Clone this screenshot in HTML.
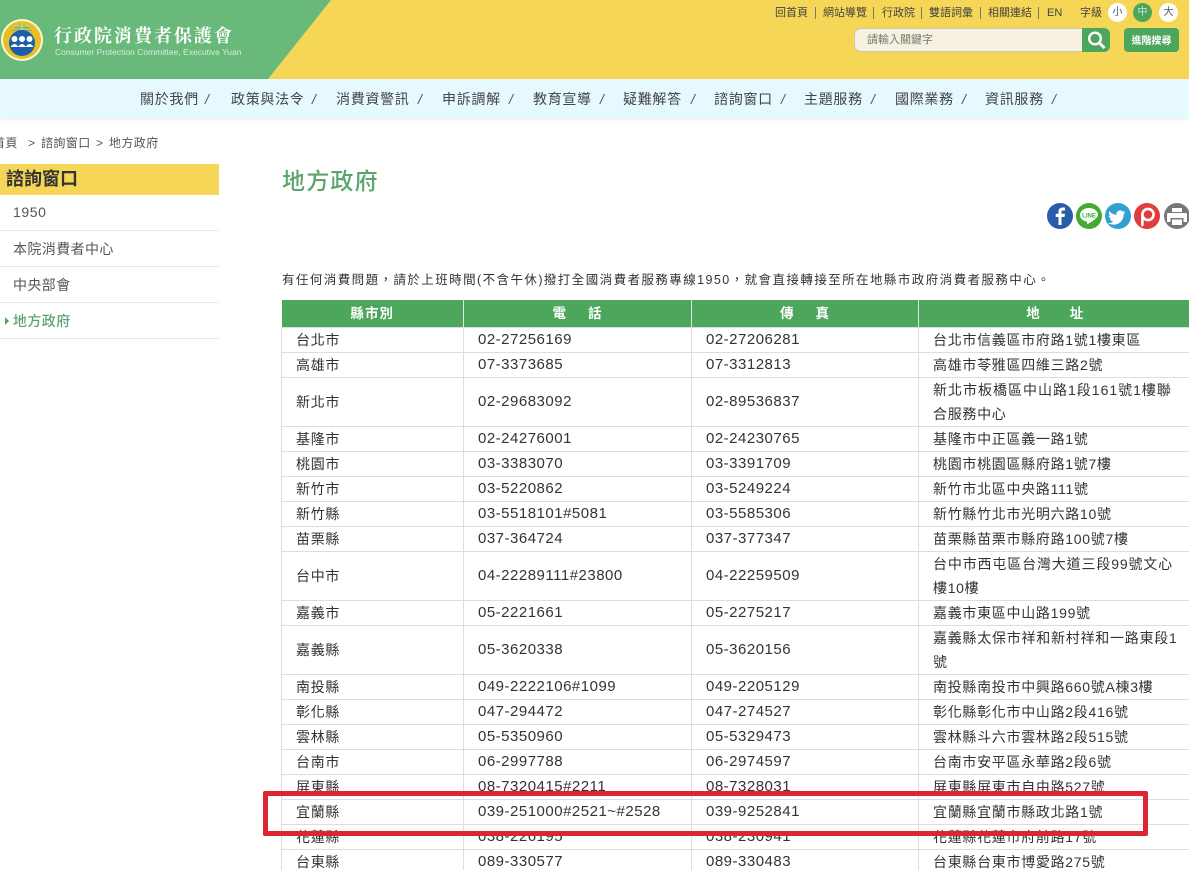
<!DOCTYPE html>
<html lang="zh-Hant"><head><meta charset="utf-8"><title>地方政府</title>
<style>
html,body{margin:0;padding:0;width:1189px;height:870px;overflow:hidden;background:#fff}
body{position:relative;font-family:"Liberation Sans","Noto Sans CJK TC",sans-serif;color:#333}
.a{position:absolute;white-space:nowrap}
.top{top:6px;font-size:11px;line-height:14px;color:#444}
.sep{top:7px;width:1px;height:12px;background:#777}
.dot{top:3px;width:19px;height:19px;border-radius:50%;background:#fff;font-size:10px;line-height:19px;text-align:center;color:#555}
.nav{top:90px;font-size:14px;line-height:18px;letter-spacing:.7px;color:#444}
.sl{top:90px;font-size:14px;line-height:18px;color:#555;font-style:italic}
.side{left:13px;font-size:14px;line-height:20px;letter-spacing:.4px;color:#555}
.ln{left:0;width:219px;height:1px;background:#e8e8e8}
table{position:absolute;left:281px;top:300px;width:910px;table-layout:fixed;border-collapse:collapse;font-size:14px;letter-spacing:.7px;color:#333}
th{background:#4ca65c;color:#fff;height:27px;padding:0;font-size:13.5px;font-weight:700;border-left:1px solid #e4e4e4;line-height:20px;letter-spacing:1px}
th i{display:inline-block;width:21px}
td{border:1px solid #ddd;padding:0 0 0 14px;line-height:24px;white-space:nowrap;vertical-align:middle}
td:nth-child(2),td:nth-child(3){font-size:15px;letter-spacing:.5px}
tr{height:25px}
tr.d{height:49px}
</style></head><body>
<div class="a" style="left:0;top:0;width:1189px;height:79px;background:#f5d657"></div>
<svg class="a" style="left:0;top:0" width="340" height="79"><polygon points="0,0 331,0 268,79 0,79" fill="#68b97a"/>
<circle cx="22" cy="40" r="21" fill="#fdf6d0"/><circle cx="22" cy="40" r="19" fill="#e9bd25"/>
<path d="M12 31a11 11 0 0 1 20 0z" fill="#7fb06a"/><path d="M22 22v10M15 26h14M13 29h18" stroke="#f3e59a" stroke-width=".8"/>
<circle cx="22" cy="43" r="13" fill="#1c5fa8"/>
<circle cx="14.500" cy="39" r="3" fill="#fff"/><circle cx="22" cy="39" r="3" fill="#fff"/><circle cx="29.500" cy="39" r="3" fill="#fff"/>
<path d="M10.500 47q4-6 8 0zM18 47q4-6 8 0zM25.500 47q4-6 8 0z" fill="#fff"/></svg>
<div class="a" style="left:54px;top:25px;font-family:'Liberation Serif','Noto Serif CJK TC','Noto Serif CJK SC',serif;font-weight:700;font-size:18px;line-height:22px;letter-spacing:2px;color:#fff">行政院消費者保護會</div>
<div class="a" style="left:55px;top:46px;font-size:8.500px;line-height:12px;color:#d6eeda">Consumer Protection Committee, Executive Yuan</div>

<span class="a top" style="left:775px">回首頁</span><i class="a sep" style="left:815px"></i>
<span class="a top" style="left:823px">網站導覽</span><i class="a sep" style="left:873px"></i>
<span class="a top" style="left:882px">行政院</span><i class="a sep" style="left:921px"></i>
<span class="a top" style="left:929px">雙語詞彙</span><i class="a sep" style="left:980px"></i>
<span class="a top" style="left:988px">相關連結</span><i class="a sep" style="left:1038px"></i>
<span class="a top" style="left:1047px">EN</span>
<span class="a top" style="left:1080px">字級</span>
<span class="a dot" style="left:1108px">小</span>
<span class="a dot" style="left:1133px;background:#4ca65c;color:#cfe8d3">中</span>
<span class="a dot" style="left:1159px">大</span>

<div class="a" style="left:854px;top:28px;width:236px;height:22px;background:#f7f2e0;border:1px solid #ccc8b4;border-radius:7px"></div>
<span class="a" style="left:867px;top:33px;font-size:11px;line-height:14px;color:#777">請輸入關鍵字</span>
<svg class="a" style="left:1082px;top:28px" width="28" height="24"><path d="M0 0h22a6 6 0 0 1 6 6v12a6 6 0 0 1-6 6H0z" fill="#4ca65c"/><circle cx="13" cy="10.500" r="5.800" fill="none" stroke="#fff" stroke-width="2.400"/><path d="M17.500 15l5 5" stroke="#fff" stroke-width="3"/></svg>
<div class="a" style="left:1124px;top:28px;width:55px;height:24px;border-radius:4px;background:#4ca65c;color:#fff;font-size:10px;font-weight:700;line-height:28px;text-align:center">進階搜尋</div>

<div class="a" style="left:0;top:79px;width:1189px;height:39px;background:#e5f9ff;box-shadow:0 1px 3px rgba(0,0,0,.1)"></div>
<span class="a nav" style="left:140px">關於我們</span><span class="a sl" style="left:205px">/</span>
<span class="a nav" style="left:231px">政策與法令</span><span class="a sl" style="left:312px">/</span>
<span class="a nav" style="left:336px">消費資警訊</span><span class="a sl" style="left:418px">/</span>
<span class="a nav" style="left:442px">申訴調解</span><span class="a sl" style="left:509px">/</span>
<span class="a nav" style="left:533px">教育宣導</span><span class="a sl" style="left:600px">/</span>
<span class="a nav" style="left:623px">疑難解答</span><span class="a sl" style="left:691px">/</span>
<span class="a nav" style="left:714px">諮詢窗口</span><span class="a sl" style="left:781px">/</span>
<span class="a nav" style="left:804px">主題服務</span><span class="a sl" style="left:871px">/</span>
<span class="a nav" style="left:895px">國際業務</span><span class="a sl" style="left:962px">/</span>
<span class="a nav" style="left:985px">資訊服務</span><span class="a sl" style="left:1052px">/</span>

<span class="a" style="left:-7px;top:136px;font-size:12px;line-height:15px;letter-spacing:.4px;color:#555">首頁</span>
<span class="a" style="left:28px;top:136px;font-size:12px;line-height:15px;color:#555">&gt;</span>
<span class="a" style="left:41px;top:136px;font-size:12px;line-height:15px;letter-spacing:.4px;color:#555">諮詢窗口</span>
<span class="a" style="left:96px;top:136px;font-size:12px;line-height:15px;color:#555">&gt;</span>
<span class="a" style="left:109px;top:136px;font-size:12px;line-height:15px;letter-spacing:.4px;color:#555">地方政府</span>

<div class="a" style="left:0;top:164px;width:219px;height:31px;background:#f5d657"></div>
<span class="a" style="left:6px;top:169px;font-size:18px;line-height:21px;font-weight:700;color:#333">諮詢窗口</span>
<span class="a side" style="top:202px;letter-spacing:.6px">1950</span><i class="a ln" style="top:230px"></i>
<span class="a side" style="top:239px">本院消費者中心</span><i class="a ln" style="top:266px"></i>
<span class="a side" style="top:275px">中央部會</span><i class="a ln" style="top:302px"></i>
<span class="a side" style="top:311px;color:#5ba56c;font-weight:500">地方政府</span><i class="a ln" style="top:338px"></i>
<svg class="a" style="left:5px;top:317px" width="4" height="8"><path d="M0 0l4 4-4 4z" fill="#4ca65c"/></svg>

<span class="a" style="left:282px;top:166px;font-size:23px;line-height:30px;font-weight:500;letter-spacing:1.200px;color:#5ba56c">地方政府</span>

<svg class="a" style="left:1047px;top:203px" width="142" height="27">
<circle cx="13" cy="13" r="13" fill="#2a5caa"/><path d="M14.500 22v-8h3l.5-3.200h-3.500V9c0-1 .4-1.500 1.600-1.500H18V4.700c-.6-.1-1.500-.2-2.400-.2-2.500 0-4.100 1.500-4.100 4.200v2.100H8.700V14h2.800v8z" fill="#fff"/>
<circle cx="42" cy="13" r="13" fill="#43ab2f"/><path d="M42 5c-5 0-9 3-9 7 0 3.400 2.900 6 6.800 6.500.5.100.4 2 .2 2.700 2-.8 6.500-3.500 9-6 1.200-1.200 2-2.100 2-3.200 0-4-4-7-9-7z" fill="#fff"/><text x="42" y="14.300" text-anchor="middle" font-family="Liberation Sans,sans-serif" font-size="6" font-weight="700" fill="#43ab2f">LINE</text>
<circle cx="71" cy="13" r="13" fill="#33a0d4"/><path d="M80 8.200c-.7.300-1.400.5-2.100.6.800-.5 1.300-1.200 1.600-2-.7.400-1.500.7-2.300.9a3.700 3.700 0 0 0-6.300 3.400c-3-.2-5.700-1.600-7.500-3.900-1 1.700-.5 3.800 1.100 4.900-.6 0-1.200-.2-1.700-.5 0 1.800 1.300 3.300 3 3.700-.5.100-1.100.2-1.700.1.500 1.500 1.900 2.500 3.500 2.600-1.600 1.200-3.500 1.800-5.500 1.600 1.700 1.100 3.700 1.700 5.700 1.700 6.900 0 10.700-5.800 10.500-11 .7-.6 1.300-1.200 1.800-2z" fill="#fff" transform="translate(1.500 1.200) scale(.96)"/>
<circle cx="100" cy="13" r="13" fill="#e23d3d"/><circle cx="101" cy="11.500" r="5.600" fill="none" stroke="#fff" stroke-width="2.600"/><path d="M95.400 11.500V22" stroke="#fff" stroke-width="2.600" stroke-linecap="round"/>
<circle cx="130" cy="13" r="13" fill="#777"/><path d="M125 5h10v4h-10zM121 10h18a1 1 0 0 1 1 1v8h-3.500v-4h-13v4H120v-8a1 1 0 0 1 1-1z" fill="#fff"/><path d="M125 16.500h10V22h-10z" fill="#fff"/>
</svg>

<div class="a" style="left:282px;top:271px;font-size:12.500px;line-height:18px;letter-spacing:1.430px;color:#333">有任何消費問題，請於上班時間(不含午休)撥打全國消費者服務專線1950，就會直接轉接至所在地縣市政府消費者服務中心。</div>

<table><colgroup><col style="width:182px"><col style="width:228px"><col style="width:227px"><col style="width:273px"></colgroup>
<tr style="height:27px"><th style="border-left:0">縣市別</th><th>電<i></i>話</th><th>傳<i></i>真</th><th>地　　址</th></tr>
<tr><td>台北市</td><td>02-27256169</td><td>02-27206281</td><td>台北市信義區市府路1號1樓東區</td></tr>
<tr><td>高雄市</td><td>07-3373685</td><td>07-3312813</td><td>高雄市苓雅區四維三路2號</td></tr>
<tr class="d"><td>新北市</td><td>02-29683092</td><td>02-89536837</td><td><span style="letter-spacing:1px">新北市板橋區中山路1段161號1樓聯</span><br>合服務中心</td></tr>
<tr><td>基隆市</td><td>02-24276001</td><td>02-24230765</td><td>基隆市中正區義一路1號</td></tr>
<tr><td>桃園市</td><td>03-3383070</td><td>03-3391709</td><td>桃園市桃園區縣府路1號7樓</td></tr>
<tr><td>新竹市</td><td>03-5220862</td><td>03-5249224</td><td>新竹市北區中央路111號</td></tr>
<tr><td>新竹縣</td><td>03-5518101#5081</td><td>03-5585306</td><td>新竹縣竹北市光明六路10號</td></tr>
<tr><td>苗栗縣</td><td>037-364724</td><td>037-377347</td><td>苗栗縣苗栗市縣府路100號7樓</td></tr>
<tr class="d"><td>台中市</td><td>04-22289111#23800</td><td>04-22259509</td><td><span style="letter-spacing:.85px">台中市西屯區台灣大道三段99號文心</span><br>樓10樓</td></tr>
<tr><td>嘉義市</td><td>05-2221661</td><td>05-2275217</td><td>嘉義市東區中山路199號</td></tr>
<tr class="d"><td>嘉義縣</td><td>05-3620338</td><td>05-3620156</td><td><span style="letter-spacing:.75px">嘉義縣太保市祥和新村祥和一路東段1</span><br>號</td></tr>
<tr><td>南投縣</td><td>049-2222106#1099</td><td>049-2205129</td><td>南投縣南投市中興路660號A棟3樓</td></tr>
<tr><td>彰化縣</td><td>047-294472</td><td>047-274527</td><td>彰化縣彰化市中山路2段416號</td></tr>
<tr><td>雲林縣</td><td>05-5350960</td><td>05-5329473</td><td>雲林縣斗六市雲林路2段515號</td></tr>
<tr><td>台南市</td><td>06-2997788</td><td>06-2974597</td><td>台南市安平區永華路2段6號</td></tr>
<tr><td>屏東縣</td><td>08-7320415#2211</td><td>08-7328031</td><td>屏東縣屏東市自由路527號</td></tr>
<tr><td>宜蘭縣</td><td>039-251000#2521~#2528</td><td>039-9252841</td><td>宜蘭縣宜蘭市縣政北路1號</td></tr>
<tr><td>花蓮縣</td><td>038-226195</td><td>038-230941</td><td>花蓮縣花蓮市府前路17號</td></tr>
<tr><td>台東縣</td><td>089-330577</td><td>089-330483</td><td>台東縣台東市博愛路275號</td></tr>
</table>

<div class="a" style="left:263px;top:791px;width:875px;height:35px;border:5px solid #dc2530;border-radius:2px"></div>
</body></html>
